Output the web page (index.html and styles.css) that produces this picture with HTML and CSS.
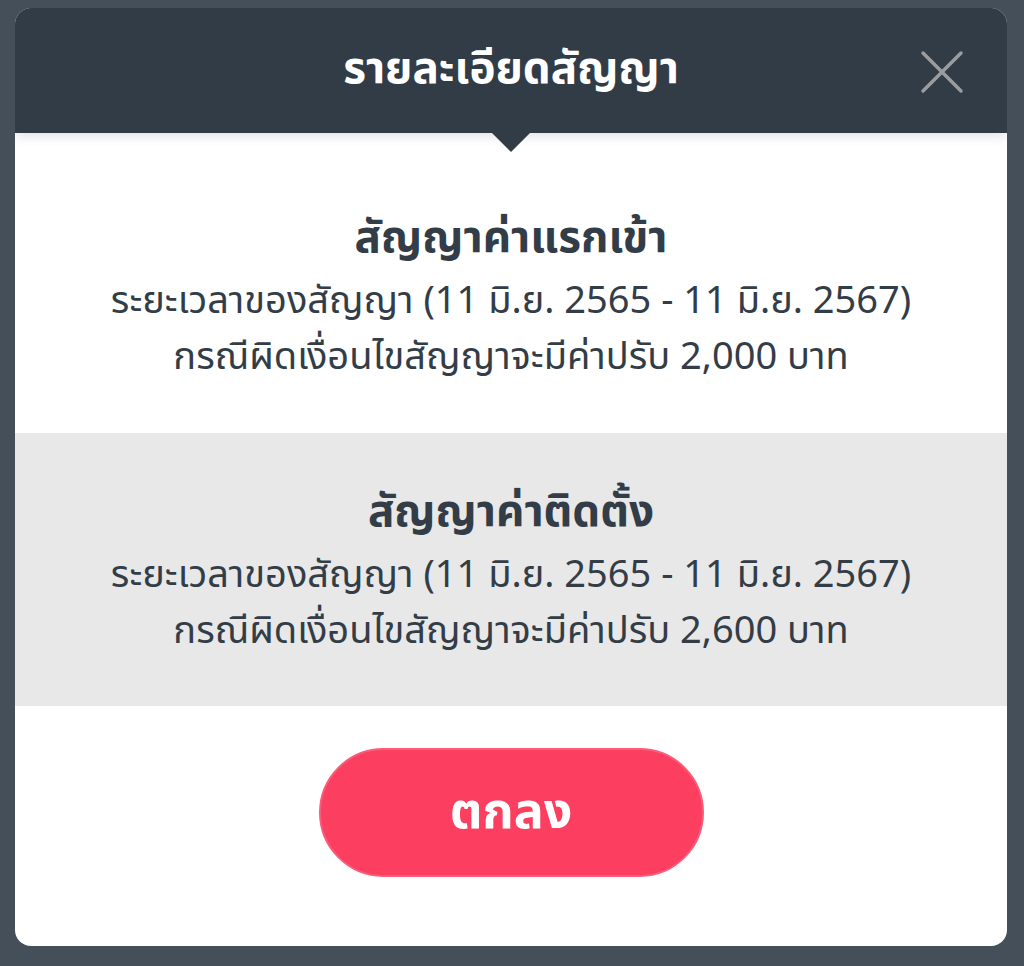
FILE: index.html
```html
<!DOCTYPE html>
<html lang="th">

<head>
    <meta charset="UTF-8">
    <meta name="viewport" content="width=device-width, initial-scale=1.0">
    <title>รายละเอียดสัญญา</title>
    <link rel="stylesheet" href="styles.css">
</head>

<body>
    <!-- กล่องรายละเอียดสัญญา -->
    <div class="modal">
        <div class="modal-head">
            <h1 class="modal-title">รายละเอียดสัญญา</h1>
            <button class="close" type="button">
                <svg width="44" height="44" viewBox="0 0 44 44">
                    <path d="M3 3 L41 41 M41 3 L3 41" stroke="#9a9c9e" stroke-width="3.5" stroke-linecap="round" fill="none" />
                </svg>
            </button>
        </div>

        <div class="contract">
            <h2>สัญญาค่าแรกเข้า</h2>
            <p>ระยะเวลาของสัญญา (11 มิ.ย. 2565 - 11 มิ.ย. 2567)</p>
            <p>กรณีผิดเงื่อนไขสัญญาจะมีค่าปรับ 2,000 บาท</p>
        </div>

        <div class="contract grey">
            <h2>สัญญาค่าติดตั้ง</h2>
            <p>ระยะเวลาของสัญญา (11 มิ.ย. 2565 - 11 มิ.ย. 2567)</p>
            <p>กรณีผิดเงื่อนไขสัญญาจะมีค่าปรับ 2,600 บาท</p>
        </div>

        <div class="modal-foot">
            <button class="ok" type="button">ตกลง</button>
        </div>
    </div>
</body>

</html>
```

FILE: styles.css
```css
* {
    margin: 0;
    padding: 0;
    box-sizing: border-box;
}

body {
    background-color: #444f59;
    padding: 8px 17px 20px 15px;
    font-family: "Noto Sans Thai", "Noto Sans", sans-serif;
    color: #333d47;
}

.modal {
    width: 992px;
    height: 938px;
    background-color: #fff;
    border-radius: 16px;
    overflow: hidden;
}

.modal-head {
    position: relative;
    z-index: 2;
    height: 125px;
    background-color: #323c47;
    display: flex;
    align-items: center;
    justify-content: center;
    box-shadow: 0 3px 12px rgba(0, 0, 0, .12);
}

/* ลูกศรใต้หัว */
.modal-head::after {
    content: "";
    position: absolute;
    left: 477px;
    top: 125px;
    border-left: 19px solid transparent;
    border-right: 19px solid transparent;
    border-top: 19px solid #323c47;
}

.modal-title {
    font-size: 44px;
    font-weight: 700;
    color: #fff;
    line-height: 1;
    margin-top: -2px;
}

.close {
    position: absolute;
    right: 43px;
    top: 42px;
    background: none;
    border: 0;
    width: 44px;
    height: 44px;
    cursor: pointer;
}

.close svg {
    display: block;
}

.contract {
    text-align: center;
    height: 300px;
    padding-top: 78px;
}

.contract h2 {
    font-size: 44px;
    font-weight: 700;
    line-height: 56px;
}

.contract p {
    font-size: 38px;
    line-height: 56px;
}

.contract h2 + p {
    margin-top: 7px;
}

.grey {
    background-color: #e8e8e8;
    height: 273px;
    padding-top: 52px;
}

.modal-foot {
    display: flex;
    justify-content: center;
    padding-top: 42px;
}

.ok {
    width: 385px;
    height: 129px;
    border-radius: 65px;
    background-color: #fc3e61;
    border: 2px solid #fa5c79;
    color: #fff;
    font-family: inherit;
    font-size: 50px;
    font-weight: 700;
    cursor: pointer;
}
```
